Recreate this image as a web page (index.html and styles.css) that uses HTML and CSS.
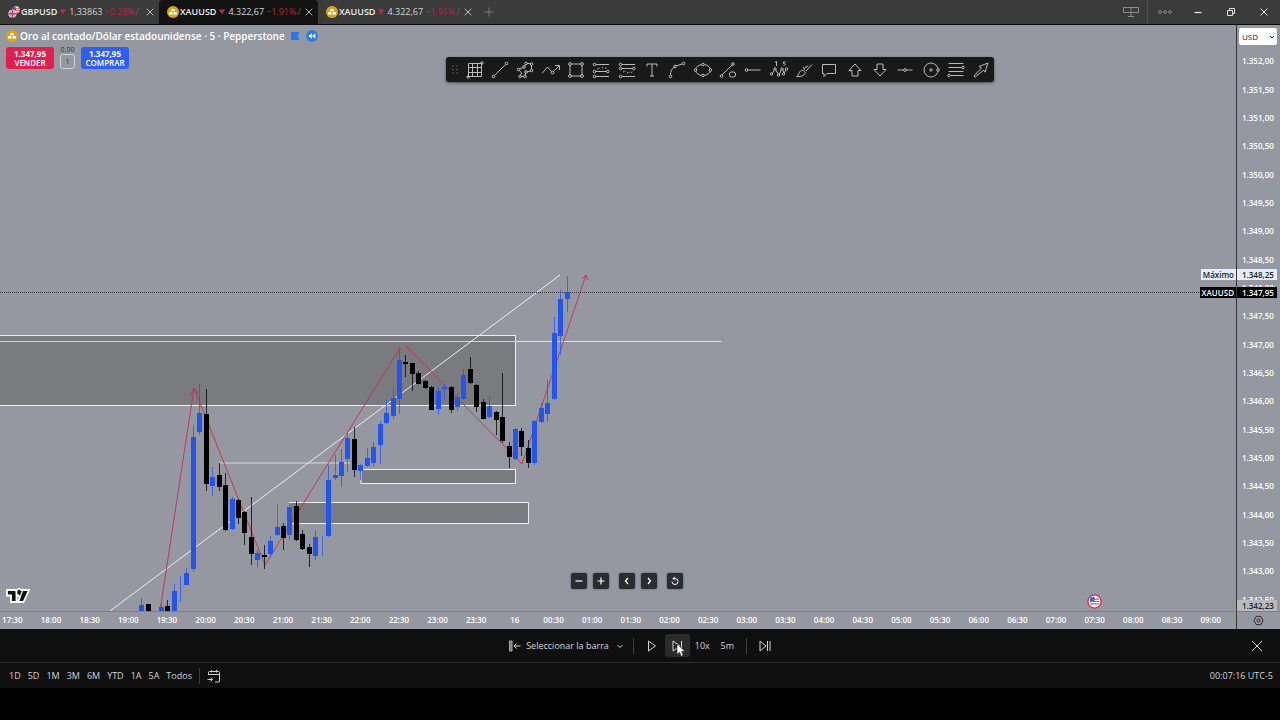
FILE: index.html
```html
<!DOCTYPE html>
<html lang="es">
<head>
    <meta charset="UTF-8">
    <meta name="viewport" content="width=device-width, initial-scale=1.0">
    <title>XAUUSD 4.322,67</title>
    <link rel="stylesheet" href="styles.css">
</head>
<body>
    <svg class="defs" aria-hidden="true">
        <symbol id="gold" viewBox="0 0 12 12">
            <circle cx="6" cy="6" r="6" fill="#d9a514"/>
            <path d="M4.7 3h2.6l.7 2.3H4zM2.5 6h2.7l.5 2.4H1.8zM6.8 6h2.7l.7 2.4H6.3z" fill="#fff"/>
        </symbol>
        <symbol id="cross" viewBox="0 0 12 12">
            <path d="M2 2l8 8M10 2l-8 8"/>
        </symbol>
    </svg>

    <header class="titlebar">
        <nav class="tabs">
            <div class="tab">
                <svg class="coin" viewBox="0 0 12 12">
                    <circle cx="8.2" cy="3.8" r="3.6" fill="#dfe3f2"/>
                    <path d="M5 2.6h6.5M4.8 4.4h7M6 6.2h5" stroke="#d2445c" stroke-width=".8"/>
                    <path d="M5 1.2h3v3H5z" fill="#3d5fb5"/>
                    <circle cx="4.4" cy="7.8" r="4" fill="#e8d5de"/>
                    <path d="M.5 7.8h8M4.4 4v8" stroke="#d2344f" stroke-width="1.4"/>
                    <path d="M1.6 5.2l5.6 5.4M7.2 5.2l-5.6 5.4" stroke="#5a6eb0" stroke-width=".7"/>
                </svg>
                <span class="symbol">GBPUSD</span><svg class="down" viewBox="0 0 7 7"><path d="M0 .5h7l-3.500 6z"/></svg><span class="price">1,33863</span><span class="change">−0.28%</span><span class="slash">/</span>
                <button class="close" aria-label="Cerrar pestaña"><svg class="icon"><use href="#cross"/></svg></button>
            </div>
            <div class="tab active">
                <svg class="coin"><use href="#gold"/></svg>
                <span class="symbol">XAUUSD</span><svg class="down" viewBox="0 0 7 7"><path d="M0 .5h7l-3.500 6z"/></svg><span class="price">4.322,67</span><span class="change">−1.91%</span><span class="slash">/</span>
                <button class="close" aria-label="Cerrar pestaña"><svg class="icon"><use href="#cross"/></svg></button>
            </div>
            <div class="tab">
                <svg class="coin"><use href="#gold"/></svg>
                <span class="symbol">XAUUSD</span><svg class="down" viewBox="0 0 7 7"><path d="M0 .5h7l-3.500 6z"/></svg><span class="price">4.322,67</span><span class="change">−1.91%</span><span class="slash">/</span>
                <button class="close" aria-label="Cerrar pestaña"><svg class="icon"><use href="#cross"/></svg></button>
            </div>
            <button class="new-tab" aria-label="Nueva pestaña"><svg class="icon" viewBox="0 0 12 12"><path d="M6 .5v11M.5 6h11"/></svg></button>
        </nav>
        <div class="window-controls">
            <button class="layout" aria-label="Diseño"><svg viewBox="0 0 18 12"><path d="M1.5 1.5h15v5h-15zM9 1.5v9M6 10.5h6"/></svg></button>
            <button class="more" aria-label="Más"><svg viewBox="0 0 18 12"><circle cx="4" cy="6" r="1.4"/><circle cx="9" cy="6" r="1.4"/><circle cx="14" cy="6" r="1.4"/></svg></button>
            <button aria-label="Minimizar"><svg viewBox="0 0 18 12"><path d="M5.5 6.5h7" stroke-width="1.3"/></svg></button>
            <button aria-label="Restaurar"><svg viewBox="0 0 18 12"><path d="M5.5 4.5h5v5h-5zM7.5 4.5v-2h5v5h-2"/></svg></button>
            <button aria-label="Cerrar"><svg viewBox="0 0 18 12"><path d="M5.5 2.5l7 7M12.5 2.5l-7 7"/></svg></button>
        </div>
    </header>

    <main class="chart">
        <section class="pane">
            <svg class="plot" viewBox="0 25 1236 586" preserveAspectRatio="none">
                <g class="zones">
                    <rect x="-2" y="335.5" width="517.5" height="70"/>
                    <rect x="361" y="469.5" width="154.5" height="14"/>
                    <rect x="289.5" y="502.5" width="239" height="21"/>
                </g>
                <path class="level" d="M0 341.5H722M219 463H350"/>
                <path class="trend" d="M110 611L560 275"/>
                <g class="zigzag">
                    <path d="M160 611L194 388M190 396l4-8 4 6"/>
                    <path d="M194 388L265 565L400 348M406 346L522 464"/>
                    <path d="M522 464L586 275M582 279l4-4 2 5"/>
                </g>
                <path class="last-price" d="M0 292.5H1236"/>
                <g id="candles"></g>
            </svg>

            <div class="legend">
                <div class="legend-title">
                    <svg class="coin"><use href="#gold"/></svg>
                    <h1>Oro al contado/Dólar estadounidense · 5 · Pepperstone</h1>
                    <svg class="flag" viewBox="0 0 10 10"><path d="M1 1h8v8H1z" fill="#2c74e8"/><path d="M9 2.5L7 5l2 2.500z" fill="#5d8fe0"/></svg>
                    <svg class="coin" viewBox="0 0 12 12"><circle cx="6" cy="6" r="6" fill="#2f7de0"/><path d="M5.800 3.500v5L2.500 6zM9.300 3.500v5L6 6z" fill="#fff"/></svg>
                </div>
                <div class="orders">
                    <button class="order sell">1.347,95<span>VENDER</span></button>
                    <div class="spread">
                        <span>0,00</span>
                        <button>1</button>
                    </div>
                    <button class="order buy">1.347,95<span>COMPRAR</span></button>
                </div>
            </div>

            <div class="toolbar" role="toolbar">
                <svg class="grip" viewBox="0 0 6 10"><path d="M0 1h2M4 1h2M0 4.500h2M4 4.500h2M0 8h2M4 8h2"/></svg>
                <div class="tools">
                    <button aria-label="Cuadrícula"><svg viewBox="0 0 18 18"><path d="M2.500 2.500h13v13h-13zM6.500 2.500v13M11.500 2.500v13M2.500 6.500h13M2.500 11.500h13"/><circle cx="16" cy="2" r="1.200"/><circle cx="2" cy="16" r="1.200"/></svg></button>
                    <button aria-label="Línea de tendencia"><svg viewBox="0 0 18 18"><path d="M3.500 14.500L14.500 3.500"/><circle cx="2.500" cy="15.500" r="1.300"/><circle cx="15.500" cy="2.500" r="1.300"/></svg></button>
                    <button aria-label="Polígono"><svg viewBox="0 0 18 18"><path d="M3.500 8L7 6.500M8.500 5L9.500 3.500M11 2.500h3.500M15.500 4v4M14.500 10l-3.500 1M9.500 12v2.500M8 15.500H5M4.500 14.500l1-2.500L3.500 9.500"/><circle cx="2.500" cy="8.500" r="1.300"/><circle cx="8" cy="6" r="1.300"/><circle cx="10" cy="2.500" r="1.300"/><circle cx="15.500" cy="3" r="1.300"/><circle cx="15.500" cy="9.500" r="1.300"/><circle cx="10" cy="11" r="1.300"/><circle cx="9" cy="15.500" r="1.300"/><circle cx="4" cy="15.500" r="1.300"/></svg></button>
                    <button aria-label="Trayectoria"><svg viewBox="0 0 18 18"><path d="M0 12.500L5.500 6l4 4.500M11.500 10.500L17 5M13 4.500h4.500V9"/><circle cx="10.500" cy="11.500" r="1.400"/></svg></button>
                    <button aria-label="Rectángulo"><svg viewBox="0 0 18 18"><path d="M4 3h10M15 4v10M14 15H4M3 14V4"/><circle cx="3" cy="3" r="1.400"/><circle cx="15" cy="3" r="1.400"/><circle cx="15" cy="15" r="1.400"/><circle cx="3" cy="15" r="1.400"/></svg></button>
                    <button aria-label="Posición larga"><svg viewBox="0 0 18 18"><path d="M4 3.500h13M3.500 10.500h11M4 15.500h13"/><path d="M5 8l3-1M10 7l2-1.500M13 7.500l2-1" stroke-dasharray="1.500 1"/><circle cx="2.500" cy="3.500" r="1.300"/><circle cx="2.500" cy="10.500" r="1.300"/><circle cx="15.800" cy="10.500" r="1.300"/><circle cx="2.500" cy="15.500" r="1.300"/></svg></button>
                    <button aria-label="Posición corta"><svg viewBox="0 0 18 18"><path d="M4 3.500h13M3.500 7.500h11M4 15.500h13"/><path d="M5 11l3-1M9 12l3-1M13 11.500l2-1" stroke-dasharray="1.500 1"/><circle cx="2.500" cy="3.500" r="1.300"/><circle cx="2.500" cy="7.500" r="1.300"/><circle cx="15.800" cy="7.500" r="1.300"/><circle cx="2.500" cy="15.500" r="1.300"/></svg></button>
                    <button aria-label="Texto"><svg viewBox="0 0 18 18"><path d="M4 5.500v-2.500h10v2.500M9 3v12M7 15h4"/></svg></button>
                    <button aria-label="Curva"><svg viewBox="0 0 18 18"><path d="M2.500 14c0-4 1.500-6.500 4-8M8 5l6-2"/><circle cx="2.500" cy="15.500" r="1.300"/><circle cx="7" cy="5.500" r="1.300"/><circle cx="15.500" cy="2.500" r="1.300"/></svg></button>
                    <button aria-label="Elipse"><svg viewBox="0 0 18 18"><ellipse cx="9" cy="9" rx="7.500" ry="5.500"/><circle class="dot" cx="9" cy="3.500" r="1.300"/><circle class="dot" cx="9" cy="14.500" r="1.300"/><circle class="dot" cx="1.500" cy="9" r="1.300"/><circle class="dot" cx="16.500" cy="9" r="1.300"/></svg></button>
                    <button aria-label="Líneas y formas"><svg viewBox="0 0 18 18"><path d="M3 14L13 4"/><circle cx="2.500" cy="15" r="1.300"/><circle cx="14" cy="3" r="1.300"/><rect x="10.500" y="11" width="6" height="5" rx="2"/></svg></button>
                    <button aria-label="Rayo horizontal"><svg viewBox="0 0 18 18"><path d="M4 9h12.500"/><circle cx="2.500" cy="9" r="1.300"/></svg></button>
                    <button aria-label="Onda de Elliott"><svg viewBox="0 0 18 18"><path d="M2 13l3-5 4 6 3-7 2 5 3-5M5 1.500l1.500-1V5M15.500 1h-2v1.500c2-.5 2.500 2 0 2"/><circle class="dot" cx="1.500" cy="13" r="1.200"/><circle class="dot" cx="5" cy="8" r="1.200"/><circle class="dot" cx="8.500" cy="14" r="1.200"/><circle class="dot" cx="12" cy="8" r="1.200"/><circle class="dot" cx="13.500" cy="13" r="1.200"/><circle class="dot" cx="16.500" cy="8" r="1.200"/></svg></button>
                    <button aria-label="Pincel"><svg viewBox="0 0 18 18"><path d="M1.500 15.500c2 0 2-5 5-6 2-.7 4.500 1 3.500 3-1 2.500-5 3.500-8.500 3zM9.500 9l-1-3M11 10l6-6.500M9.500 7l2-1.500M13 4.500l-1.500 2"/></svg></button>
                    <button aria-label="Comentario"><svg viewBox="0 0 18 18"><path d="M2.500 3.500h13v9H7l-3 3v-3H2.500z"/></svg></button>
                    <button aria-label="Flecha arriba"><svg viewBox="0 0 18 18"><path d="M9 3l6 6.500h-3V15H6V9.500H3z"/></svg></button>
                    <button aria-label="Flecha abajo"><svg viewBox="0 0 18 18"><path d="M9 15l6-6.500h-3V3H6v5.500H3z"/></svg></button>
                    <button aria-label="Línea horizontal"><svg viewBox="0 0 18 18"><path d="M1.500 9h6M10.500 9h6"/><circle cx="9" cy="9" r="1.400"/></svg></button>
                    <button aria-label="Círculo"><svg viewBox="0 0 18 18"><circle cx="9" cy="9" r="7"/><circle cx="9" cy="9" r="1.200"/><circle class="dot" cx="16" cy="9" r="1.300"/></svg></button>
                    <button aria-label="Retroceso de Fibonacci"><svg viewBox="0 0 18 18"><path d="M1.500 2.500h15M1.500 6.500H15M1.500 10.500h15M3.500 14.500h13"/><circle class="dot" cx="16" cy="6.500" r="1.300"/><circle class="dot" cx="2" cy="14.500" r="1.300"/></svg></button>
                    <button aria-label="Flecha"><svg viewBox="0 0 18 18"><path d="M16 2L7 5.500l2.500 1.500L2 15l1 1.200 8.500-7 1.500 2z"/></svg></button>
                </div>
            </div>

            <svg class="brand" viewBox="0 0 24 16"><path d="M1 2h9.500v2.500A2.600 2.600 0 0 1 15 2h8l-5.500 12H12l2-5-3.500-3v8H5V7.500H1z" fill="#111" stroke="#fff" stroke-width="1.800"/><path d="M16.500 3l-4.500 10.500M10.500 2v4" stroke="#fff" stroke-width="1.200"/></svg>

            <div class="chart-nav">
                <button aria-label="Alejar"><svg viewBox="0 0 10 10"><path d="M1.500 5h7"/></svg></button>
                <button aria-label="Acercar"><svg viewBox="0 0 10 10"><path d="M1.500 5h7M5 1.500v7"/></svg></button>
                <button class="apart" aria-label="Anterior"><svg viewBox="0 0 10 10"><path d="M6 2L3.500 5 6 8"/></svg></button>
                <button aria-label="Siguiente"><svg viewBox="0 0 10 10"><path d="M4 2l2.500 3L4 8"/></svg></button>
                <button class="apart" aria-label="Restablecer"><svg viewBox="0 0 10 10"><path d="M2 5.500a3 3 0 1 0 3-3H3M4.800 .7L3 2.500l1.800 1.800" stroke-width="1"/></svg></button>
            </div>

            <svg class="event" viewBox="0 0 16 16"><circle cx="8" cy="8" r="7" fill="#fff" stroke="#c9304f" stroke-width="1.400"/><path d="M3.200 5.500h9.600M2.800 8h10.400M3.200 10.500h9.600" stroke="#cf5266" stroke-width="1.200"/><path d="M3.200 4.500L5 3h3v5H2.800z" fill="#2f6fd0" stroke="none"/></svg>

            <span class="line-tag high">Máximo</span>
            <span class="line-tag last">XAUUSD</span>
        </section>

        <aside class="price-axis">
            <div class="currency">
                <select aria-label="Moneda"><option>USD</option></select>
                <svg viewBox="0 0 6 6"><path d="M1 2l2 2 2-2"/></svg>
            </div>
            <div class="prices" id="prices"></div>
            <span class="price-tag high">1.348,25</span>
            <span class="price-tag last">1.347,95</span>
            <span class="price-tag low">1.342,23</span>
        </aside>

        <div class="time-axis"><div class="times" id="times"></div></div>
        <button class="axis-settings" aria-label="Ajustes"><svg viewBox="0 0 12 12"><path d="M3.500 1.500h5L11 6l-2.500 4.500h-5L1 6z"/><circle cx="6" cy="6" r="1.600"/></svg></button>
    </main>

    <section class="replay">
        <div class="replay-controls">
            <button class="select-bar"><svg viewBox="0 0 12 12"><path d="M.5 1h2.500v10H.5z" fill="#777" stroke="#aaa"/><path d="M11.500 6H5M7.500 3.500L5 6l2.500 2.500"/></svg>Seleccionar la barra<svg class="chevron" viewBox="0 0 8 8"><path d="M1.500 3L4 5.500 6.500 3"/></svg></button>
            <span class="divider"></span>
            <button aria-label="Reproducir"><svg viewBox="0 0 12 12"><path d="M2.500 1v10L9.500 6z"/></svg></button>
            <button class="forward" aria-label="Avanzar">
                <svg viewBox="0 0 12 12"><path d="M2 1v10L9 6zM10.500 1v10"/></svg>
                <svg class="pointer" viewBox="0 0 10 14"><path d="M1 1v10.500l2.500-2.300 1.700 4 2-.9-1.700-3.800H9z" fill="#fff" stroke="#222" stroke-width=".6"/></svg>
            </button>
            <button>10x</button>
            <button>5m</button>
            <span class="divider"></span>
            <button aria-label="Ir al tiempo real"><svg viewBox="0 0 12 12"><path d="M1 1v10l6-5zM8.500 1v10M11 1v10"/></svg></button>
        </div>
        <button class="replay-close" aria-label="Cerrar reproducción"><svg viewBox="0 0 12 12"><path d="M1 1l10 10M11 1L1 11"/></svg></button>
    </section>

    <footer class="ranges">
        <button>1D</button><button>5D</button><button>1M</button><button>3M</button><button>6M</button><button>YTD</button><button>1A</button><button>5A</button><button>Todos</button>
        <span class="divider"></span>
        <button aria-label="Ir a la fecha"><svg viewBox="0 0 14 14"><path d="M1.500 6V3.500a1 1 0 0 1 1-1h9a1 1 0 0 1 1 1V12a1 1 0 0 1-1 1H8M1.500 5.500h11M4.500 1v2.500M9.500 1v2.500M.5 10.500h5M3.500 8.500l2 2-2 2"/></svg></button>
        <button class="clock">00:07:16 UTC-5</button>
    </footer>

    <script src="script.js"></script>
</body>
</html>
```

FILE: styles.css
```css
* {
    box-sizing: border-box;
}
body {
    display: flex;
    flex-direction: column;
    min-height: 100vh;
    margin: 0;
    padding-bottom: 32px;
    background: #000;
    color: #d4d4d4;
    font-family: "Open Sans", "Noto Sans", sans-serif;
    font-size: 10px;
    line-height: 12px;
}
button, select {
    font: inherit;
    color: inherit;
}
button {
    display: flex;
    align-items: center;
    justify-content: center;
    padding: 0;
    border: none;
    background: none;
    white-space: nowrap;
    cursor: pointer;
}
svg {
    display: block;
    flex: none;
    fill: none;
    stroke: currentColor;
}
.defs {
    position: absolute;
    width: 0;
    height: 0;
}
.coin {
    width: 12px;
    height: 12px;
    stroke: none;
}
.icon {
    width: 10px;
    height: 10px;
}
.divider {
    width: 1px;
    height: 16px;
    background: #3c3c3c;
}

/* title bar */
.titlebar {
    display: flex;
    justify-content: space-between;
    height: 25px;
    background: #3b3b3b;
    border-bottom: 1px solid #0c0c0c;
}
.tabs {
    display: flex;
}
.tab {
    display: flex;
    align-items: center;
    width: 159px;
    padding: 0 4px 0 8px;
    font-size: 9px;
}
.tab.active {
    background: #131313;
    border-radius: 4px 4px 0 0;
}
.tab .symbol {
    margin-left: 1px;
    color: #eee;
    font-weight: 600;
}
.down {
    width: 6px;
    height: 6px;
    margin: 0 3px;
    fill: #c2274c;
    stroke: none;
}
.change {
    margin-left: 2px;
    color: #b82449;
}
.slash {
    margin-left: 1px;
    color: #666;
}
.close {
    margin-left: auto;
}
.new-tab {
    width: 24px;
    color: #888;
}
.window-controls {
    display: flex;
}
.window-controls button {
    width: 33px;
    color: #e0e0e0;
}
.window-controls svg {
    width: 18px;
    height: 12px;
}
.window-controls .layout, .window-controls .more {
    color: #8a8a8a;
}
.window-controls .layout {
    border-right: 1px solid #505050;
}

/* chart */
.chart {
    display: grid;
    flex: 1;
    grid-template-columns: 1fr 44px;
    grid-template-rows: 1fr 18px;
    background: #9598a1;
    color: #fff;
}
.pane {
    position: relative;
    overflow: hidden;
}
.plot {
    position: absolute;
    width: 100%;
    height: 100%;
}
.zones {
    fill: rgba(100, 100, 100, 0.55);
    stroke: #eee;
}
.level {
    stroke: rgba(255, 255, 255, 0.65);
}
.trend {
    stroke: #eee;
}
.zigzag {
    stroke: #c42f50;
    stroke-width: 0.9;
}
.last-price {
    stroke: #333;
    stroke-dasharray: 1 1;
}
.up-bar {
    fill: #2454f0;
    stroke: #2454f0;
}
.down-bar {
    fill: #000;
    stroke: #000;
}
.up-bar rect, .down-bar rect {
    stroke: none;
}
.legend {
    position: relative;
    padding: 5px 6px;
}
.legend-title {
    display: flex;
    align-items: center;
    gap: 2px;
}
.legend-title h1 {
    margin: 0 3px 0 0;
    font-size: 10px;
    font-weight: 600;
}
.flag {
    width: 10px;
    height: 10px;
    margin-right: 4px;
    stroke: none;
}
.orders {
    display: flex;
    gap: 5px;
    margin-top: 5px;
    font-size: 8px;
    line-height: 9px;
}
.order {
    flex-direction: column;
    width: 48px;
    height: 22px;
    border-radius: 3px;
    font-weight: 700;
}
.order span {
    font-weight: 600;
}
.sell {
    background: #e01f4f;
}
.buy {
    background: #2f5ff2;
}
.spread {
    display: flex;
    flex-direction: column;
    align-items: center;
    width: 17px;
    margin-top: -2px;
    color: #333;
    font-size: 7px;
}
.spread button {
    width: 15px;
    height: 15px;
    border: 1px solid #d0d2d8;
    border-radius: 3px;
}
.toolbar {
    position: absolute;
    top: 32px;
    left: 446px;
    display: flex;
    align-items: center;
    width: 548px;
    height: 25px;
    padding-left: 6px;
    border-radius: 3px;
    background: #191919;
    color: #ccc;
    box-shadow: 0 1px 3px rgba(0, 0, 0, 0.5);
}
.grip {
    width: 6px;
    height: 10px;
    margin-right: 4px;
    color: #555;
}
.tools {
    display: grid;
    flex: 1;
    grid-template-columns: repeat(21, 1fr);
}
.tools svg {
    width: 18px;
    height: 18px;
    stroke-width: 0.9;
}
.dot {
    fill: #191919;
}
.brand {
    position: absolute;
    bottom: 7px;
    left: 6px;
    width: 24px;
    height: 16px;
}
.chart-nav {
    position: absolute;
    bottom: 22px;
    left: 571px;
    display: flex;
    gap: 6px;
}
.chart-nav button {
    width: 16px;
    height: 16px;
    border-radius: 2px;
    background: #2b2c30;
    box-shadow: 0 0 2px rgba(0, 0, 0, 0.5);
}
.chart-nav .apart {
    margin-left: 4px;
}
.chart-nav svg {
    width: 10px;
    height: 10px;
    stroke-width: 1.2;
}
.event {
    position: absolute;
    right: 134px;
    bottom: 2px;
    width: 15px;
    height: 15px;
}
.line-tag, .price-tag {
    position: absolute;
    height: 11px;
    font-size: 8px;
    font-weight: 600;
    line-height: 11px;
}
.line-tag {
    right: 0;
    padding: 0 2px;
}
.high {
    top: 244px;
    background: #e3edfb;
    color: #222;
}
.last {
    top: 262px;
    background: #000;
    color: #fff;
}
.low {
    bottom: 0;
    background: #b9babd;
    color: #222;
}
.price-axis {
    position: relative;
    display: flex;
    flex-direction: column;
    border-left: 1px solid #33353a;
}
.price-tag {
    left: 0;
    width: 40px;
    padding-left: 5px;
}
.currency {
    position: relative;
    height: 22px;
    padding: 3px 3px 0 2px;
}
.currency select {
    display: block;
    width: 100%;
    height: 17px;
    padding: 0 3px;
    border: none;
    border-radius: 2px;
    appearance: none;
    background: #fff;
    color: #222;
    font-size: 8px;
}
.currency svg {
    position: absolute;
    top: 9px;
    right: 5px;
    width: 6px;
    height: 6px;
    color: #222;
    pointer-events: none;
}
.prices {
    display: grid;
    flex: 1;
    grid-auto-rows: 1fr;
    align-items: center;
    margin-bottom: -3px;
    padding-left: 5px;
    font-size: 8px;
    font-weight: 600;
}
.time-axis {
    overflow: hidden;
    border-top: 1px solid #7c7f87;
}
.times {
    display: grid;
    grid-auto-columns: 1fr;
    grid-auto-flow: column;
    margin: 0 6px 0 -7px;
    font-size: 8px;
    font-weight: 600;
    line-height: 16px;
    text-align: center;
}
.axis-settings {
    border-top: 1px solid #7c7f87;
    border-left: 1px solid #33353a;
    color: #222;
}
.axis-settings svg {
    width: 11px;
    height: 11px;
}

/* bar replay */
.replay {
    position: relative;
    display: flex;
    align-items: center;
    justify-content: center;
    height: 34px;
    padding-left: 7px;
    background: #0f0f0f;
    border-bottom: 1px solid #2e2e2e;
    font-size: 9px;
}
.replay-controls {
    display: flex;
    align-items: center;
}
.replay-controls button {
    position: relative;
    width: 25px;
    height: 23px;
    border-radius: 3px;
}
.replay svg {
    width: 12px;
    height: 12px;
}
.replay-controls .select-bar {
    gap: 5px;
    width: auto;
    margin-right: 3px;
}
.replay .chevron {
    width: 8px;
    height: 8px;
    margin-left: 2px;
}
.replay .divider {
    margin: 0 6px;
}
.replay .forward {
    background: #2b2b2b;
}
.replay .pointer {
    position: absolute;
    top: 9px;
    left: 11px;
    width: 10px;
    height: 14px;
}
.replay-close {
    position: absolute;
    right: 17px;
}

/* date ranges */
.ranges {
    display: flex;
    align-items: center;
    gap: 7px;
    height: 25px;
    padding: 0 7px 0 9px;
    background: #0f0f0f;
    font-size: 9px;
}
.ranges svg {
    width: 14px;
    height: 14px;
}
.clock {
    margin-left: auto;
}
```

FILE: script.js
```js
// [direction, body top, body bottom, high, low], one every 5 minutes
const candles = [
    ['u', 605, 611, 598, 611], ['d', 604, 611, 604, 611], null,
    ['u', 607, 611, 603, 611], ['d', 606, 611, 600, 611], ['u', 591, 611, 584, 611],
    ['u', 584, 584, 576, 602], ['u', 573, 585, 568, 585], ['u', 437, 569, 425, 572],
    ['u', 413, 432, 384, 435], ['d', 414, 484, 389, 491], ['u', 477, 486, 467, 496],
    ['d', 475, 487, 463, 491], ['d', 485, 530, 473, 531], ['u', 499, 529, 497, 530],
    ['d', 500, 518, 499, 524], ['d', 512, 533, 511, 545], ['d', 537, 554, 497, 565],
    ['u', 553, 560, 550, 567], ['d', 555, 557, 545, 569], ['u', 541, 554, 536, 557],
    ['u', 527, 535, 504, 536], ['d', 526, 538, 523, 550], ['u', 507, 535, 503, 540],
    ['d', 506, 540, 501, 541], ['d', 534, 549, 530, 550], ['d', 547, 554, 544, 567],
    ['u', 537, 556, 531, 560], ['u', 545, 545, 536, 556], ['u', 480, 536, 465, 537],
    ['u', 475, 478, 455, 480], ['u', 462, 476, 449, 487], ['u', 438, 459, 432, 472],
    ['d', 439, 470, 427, 477], ['u', 465, 471, 464, 480], ['u', 458, 466, 448, 467],
    ['u', 447, 463, 442, 466], ['u', 424, 445, 421, 464], ['u', 413, 423, 400, 424],
    ['u', 398, 416, 387, 419], ['u', 360, 399, 347, 414], ['d', 362, 364, 355, 377],
    ['d', 363, 374, 363, 391], ['d', 373, 384, 371, 384], ['d', 381, 388, 380, 389],
    ['d', 387, 410, 386, 410], ['u', 391, 409, 387, 415], ['u', 387, 389, 384, 399],
    ['d', 387, 410, 386, 413], ['u', 397, 407, 393, 411], ['u', 375, 399, 369, 400],
    ['d', 369, 383, 357, 384], ['d', 385, 407, 384, 412], ['d', 402, 419, 399, 419],
    ['u', 406, 417, 396, 418], ['d', 412, 420, 411, 435], ['d', 417, 441, 373, 443],
    ['d', 446, 457, 442, 468], ['u', 429, 459, 428, 460], ['d', 431, 447, 428, 456],
    ['d', 448, 463, 440, 468], ['u', 421, 463, 420, 465], ['u', 408, 422, 403, 423],
    ['u', 403, 414, 380, 421], ['u', 333, 399, 317, 400], ['u', 299, 336, 290, 355],
    ['u', 292, 299, 276, 312]
];

const firstX = 141.3;
const step = 6.443;

document.getElementById('candles').innerHTML = candles.map((candle, i) => {
    if (!candle) return '';
    const [dir, top, bottom, high, low] = candle;
    const x = Math.round(firstX + i * step);
    return `<g class="${dir === 'u' ? 'up-bar' : 'down-bar'}">
        <path d="M${x + 0.5} ${high}V${low}" stroke-opacity="0.75"/>
        <rect x="${x - 2}" y="${top}" width="5" height="${bottom - top}"/>
    </g>`;
}).join('');

// price scale, from 1.352,00 down in steps of 0,50
let prices = '';
for (let p = 135200; p >= 134250; p -= 50) {
    const whole = Math.floor(p / 100);
    const cents = String(p % 100).padStart(2, '0');
    prices += `<span>1.${whole - 1000},${cents}</span>`;
}
document.getElementById('prices').innerHTML = prices;

// time scale, every 30 minutes from 17:30 to 09:00
let times = '';
for (let i = 0; i < 32; i++) {
    const minutes = (17 * 60 + 30 + i * 30) % 1440;
    const hh = String(Math.floor(minutes / 60)).padStart(2, '0');
    const mm = String(minutes % 60).padStart(2, '0');
    times += `<span>${minutes === 0 ? '16' : hh + ':' + mm}</span>`;
}
document.getElementById('times').innerHTML = times;
```
